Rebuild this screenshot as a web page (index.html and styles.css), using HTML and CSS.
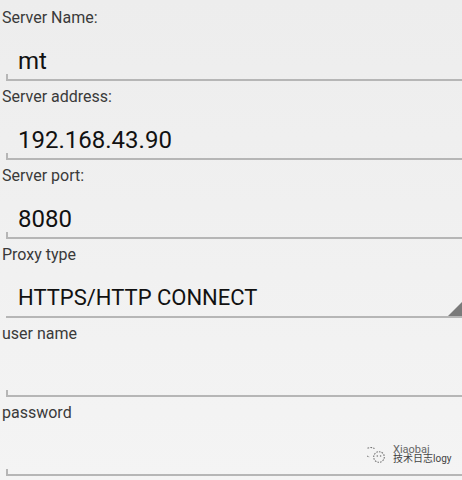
FILE: index.html
```html
<!doctype html>
<html lang="en">
<head>
  <meta charset="utf-8"/>
  <title>Proxy settings</title>
  <meta name="viewport" content="width=device-width, initial-scale=1"/>
  <link rel="stylesheet" href="styles.css">
</head>
<body>
  <main class="form">
    <div class="row">
      <div class="label">Server Name:</div>
      <div class="input">mt</div>
    </div>
    <div class="row">
      <div class="label">Server address:</div>
      <div class="input">192.168.43.90</div>
    </div>
    <div class="row">
      <div class="label">Server port:</div>
      <div class="input">8080</div>
    </div>
    <div class="row">
      <div class="label">Proxy type</div>
      <div class="input spinner">HTTPS/HTTP CONNECT</div>
    </div>
    <div class="row">
      <div class="label">user name</div>
      <div class="input"></div>
    </div>
    <div class="row last">
      <div class="label">password</div>
      <div class="input"></div>
      <!-- watermark -->
      <div class="mark">
        <svg width="19" height="18" viewBox="0 0 19 18">
          <g fill="none" stroke="#777" stroke-width="1.1" stroke-dasharray="1.6 1.1">
            <path d="M7.5 2.6a5.8 4.8 0 1 0-4.8 8.4"/>
            <circle cx="12" cy="11" r="5.3"/>
          </g>
          <circle cx="10.3" cy="10" r=".8" fill="#777"/>
          <circle cx="13.6" cy="10" r=".8" fill="#777"/>
        </svg>
        <span class="mark-txt"><span class="m1">Xiaobai</span><span class="m2">技术日志logy</span></span>
      </div>
    </div>
  </main>
</body>
</html>
```

FILE: styles.css
```css
:root{
  --clr-label:#3a3a3a;
  --clr-text:#111;
  --clr-line:#b6b6b6;
}
*{box-sizing:border-box;margin:0;padding:0}
html,body{height:100%;overflow:hidden}
body{
  background:linear-gradient(#ededed,#f4f4f4);
  font-family:Roboto,"Noto Sans","Noto Sans CJK SC",sans-serif;
  color:var(--clr-text);
  padding-top:2px;
}

/* ---------- ROWS ---------- */
.row{height:79px;position:relative}
.label{
  padding:4px 0 0 2px;
  line-height:24px;
  font-size:16px;
  color:var(--clr-label);
}
.input{
  position:relative;
  margin-left:6px;
  height:51px;
  padding:17px 0 4px 12px;
  line-height:28px;
  font-size:24px;
  border-bottom:2px solid var(--clr-line);
}
/* holo edit text end tick */
.input::before{
  content:"";
  position:absolute;
  left:0;bottom:0;
  width:2px;height:5px;
  background:var(--clr-line);
}
.spinner{font-size:22px}
.spinner::before{display:none}
.spinner::after{
  content:"";
  position:absolute;
  right:0;bottom:0;
  width:14px;height:14px;
  background:#7a7a7a;
  clip-path:polygon(100% 0,100% 100%,0 100%);
}

/* ---------- WATERMARK ---------- */
.mark{
  position:absolute;
  left:367px;top:49px;
  display:flex;
  align-items:center;
  gap:7px;
}
.mark-txt{display:flex;flex-direction:column;width:60px}
.m1,.m2{white-space:nowrap}
.m1{font-size:11px;line-height:7px;height:7px;color:#666}
.m2{font-size:10px;line-height:11px;color:#444}
```
